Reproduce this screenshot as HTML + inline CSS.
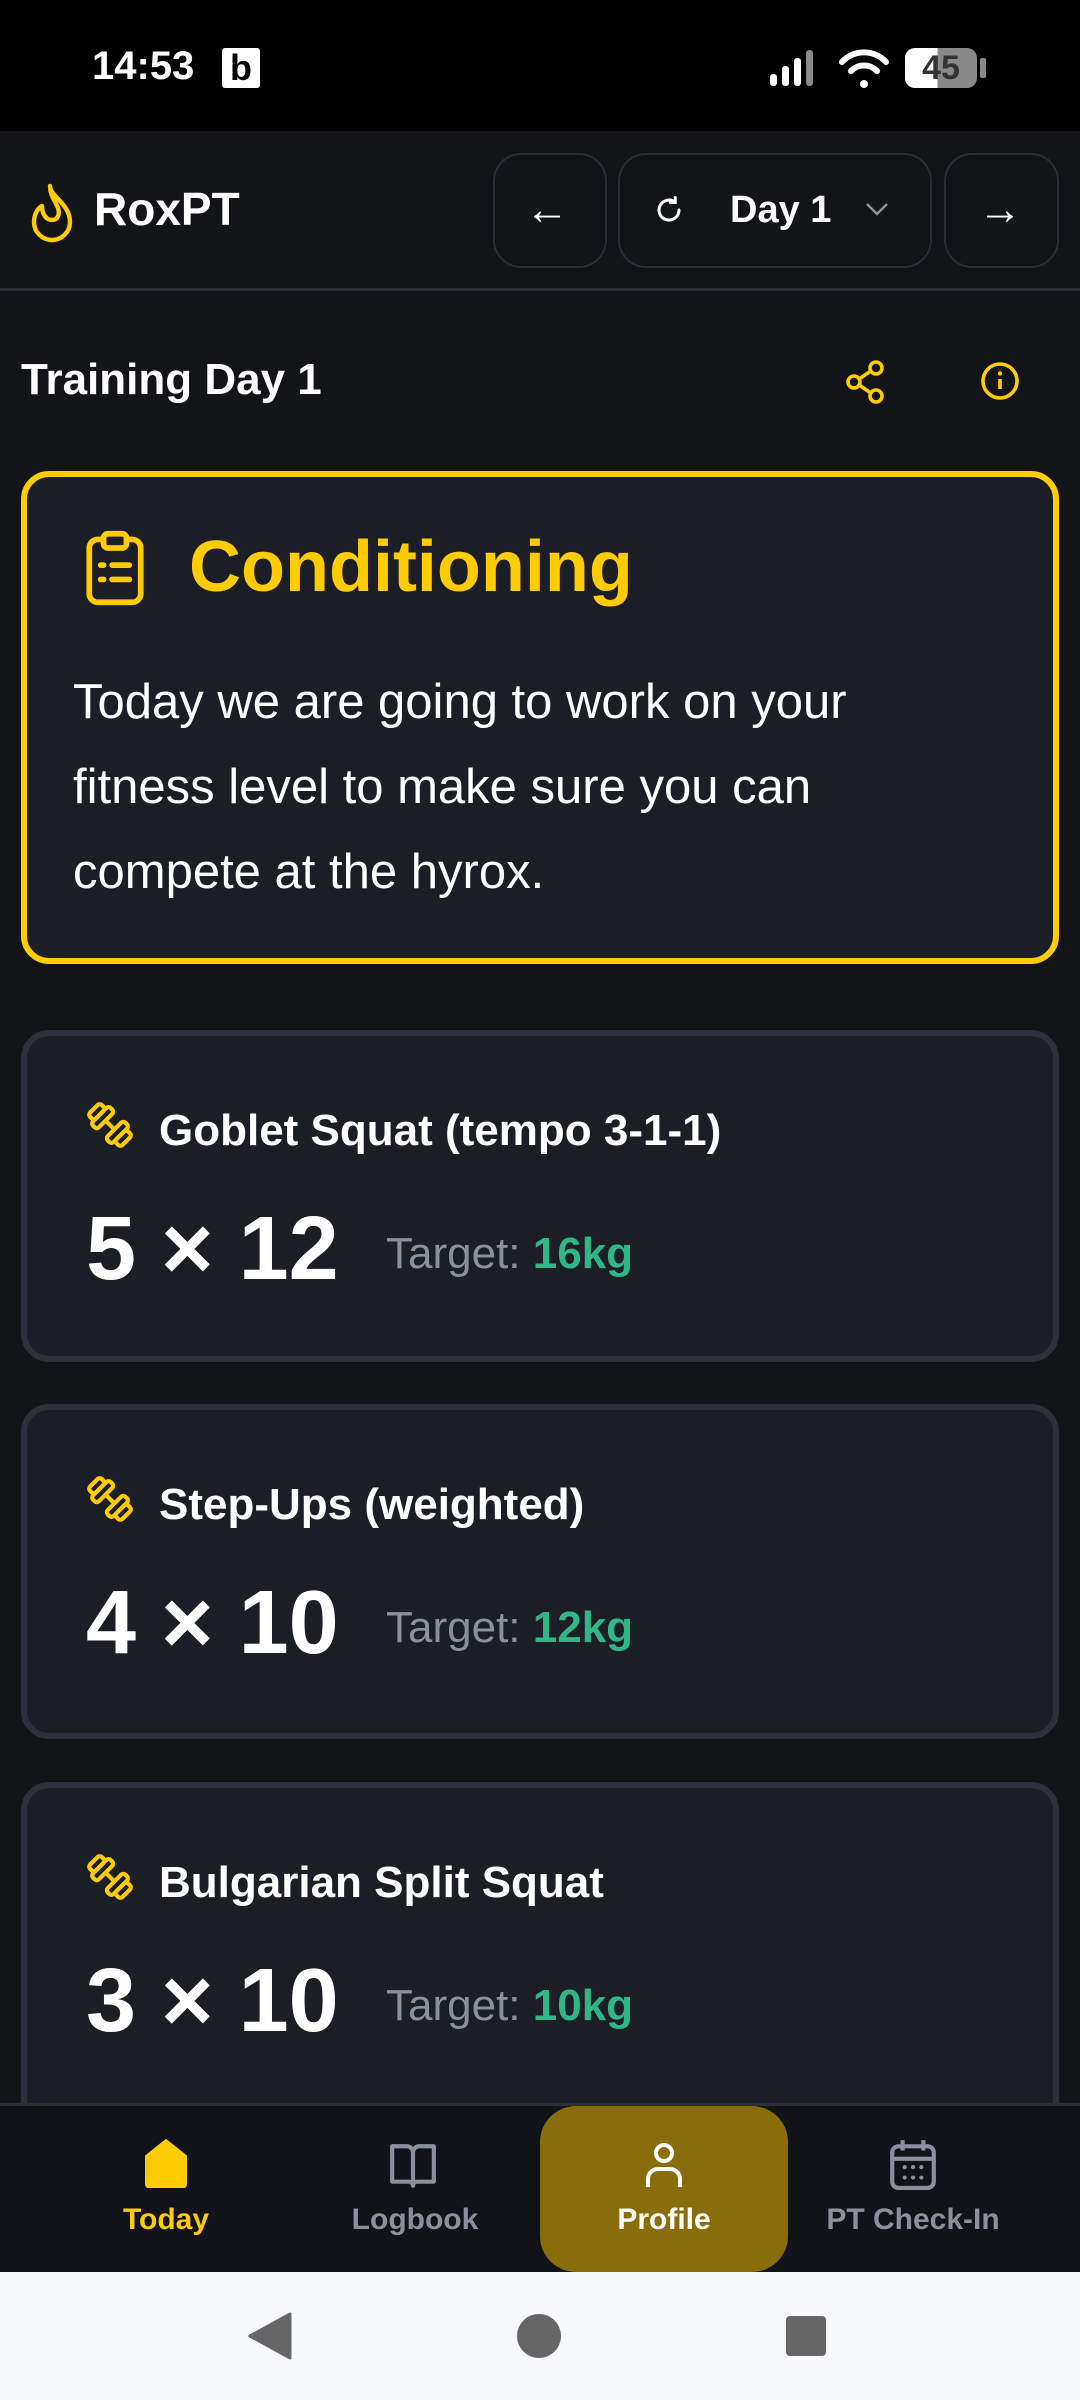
<!DOCTYPE html>
<html><head><meta charset="utf-8">
<style>
*{margin:0;padding:0;box-sizing:border-box}
body{width:1080px;height:2400px;background:#121418;font-family:"Liberation Sans",sans-serif;color:#fff;position:relative;overflow:hidden}
.a{position:absolute}
.btn{position:absolute;top:153px;height:115px;border:2px solid #2b2f38;border-radius:28px;background:#121418}
.card{position:absolute;left:21px;width:1038px;border:6px solid #2d313c;border-radius:28px;background:#1b1e25}
.t{position:absolute;left:132px;font-weight:bold;font-size:44px;white-space:nowrap}
.s{position:absolute;left:59px;font-weight:bold;font-size:90px;white-space:nowrap}
.tg{position:absolute;left:359px;font-size:44px;color:#8b909c;white-space:nowrap}
.tg b{color:#2fb886}
.nl{position:absolute;top:2203px;font-size:30px;font-weight:bold;color:#8b909c;text-align:center;width:248px}
</style></head><body>
<div class="a" style="left:0;top:0;width:1080px;height:131px;background:#000"></div>
<div class="a" style="left:92px;top:44px;font-size:40px;font-weight:bold">14:53</div>
<div class="a" style="left:222px;top:48px;width:38px;height:40px;background:#fff;border-radius:3px;color:#000;font-weight:bold;font-size:36px;text-align:center;line-height:40px">b</div>
<svg class="a" style="left:768px;top:48px" width="60" height="40"><rect x="2" y="26" width="7" height="12" rx="3" fill="#fff"/><rect x="14" y="18" width="7" height="20" rx="3" fill="#fff"/><rect x="26" y="10" width="7" height="28" rx="3" fill="#fff"/><rect x="38" y="2" width="7" height="36" rx="3" fill="#888"/></svg>
<svg class="a" style="left:838px;top:46px" width="52" height="44"><path d="M4 16 A30 30 0 0 1 48 16" stroke="#fff" stroke-width="6" fill="none" stroke-linecap="round"/><path d="M13 25 A18 18 0 0 1 39 25" stroke="#fff" stroke-width="6" fill="none" stroke-linecap="round"/><circle cx="26" cy="38" r="4" fill="#fff"/></svg>
<div class="a" style="left:905px;top:48px;width:72px;height:40px;border-radius:10px;background:linear-gradient(90deg,#fff 0 45%,#888 45%);color:#333;font-weight:bold;font-size:34px;text-align:center;line-height:40px">45</div>
<div class="a" style="left:980px;top:58px;width:6px;height:20px;background:#888;border-radius:2px"></div>

<div class="a" style="left:0;top:288px;width:1080px;height:3px;background:#2b2f38"></div>
<svg class="a" style="left:28px;top:182px" width="48" height="62" viewBox="0 0 24 31"><path d="M11 2c0 5 10 9 10 18a9 9 0 0 1-18 0c0-4 2-7 4-8 0 4 2 7 5 7 3 0 4-3 3-6-1-3-4-6-4-11z" fill="none" stroke="#ffcc00" stroke-width="2.2" stroke-linejoin="round"/></svg>
<div class="a" style="left:94px;top:182px;font-size:46px;font-weight:bold">RoxPT</div>
<div class="btn" style="left:493px;width:114px"><div class="a" style="left:30px;top:30px;font-size:44px">←</div></div>
<div class="btn" style="left:618px;width:314px">
<svg class="a" style="left:34px;top:40px" width="30" height="30" viewBox="0 0 24 24"><path d="M20 12a8 8 0 1 1-3-6.2M17 2v4h-4" fill="none" stroke="#fff" stroke-width="2.4" stroke-linecap="round"/></svg>
<div class="a" style="left:110px;top:34px;font-size:38px;font-weight:bold">Day 1</div>
<svg class="a" style="left:244px;top:44px" width="26" height="20"><path d="M3 5l10 10 10-10" stroke="#8b909c" stroke-width="2.5" fill="none"/></svg></div>
<div class="btn" style="left:944px;width:115px"><div class="a" style="left:32px;top:30px;font-size:44px">→</div></div>

<div class="a" style="left:21px;top:355px;font-size:44px;font-weight:bold">Training Day 1</div>
<svg class="a" style="left:846px;top:360px" width="40" height="44" viewBox="0 0 20 22"><circle cx="15" cy="4" r="3" fill="none" stroke="#ffcc00" stroke-width="1.8"/><circle cx="4" cy="11" r="3" fill="none" stroke="#ffcc00" stroke-width="1.8"/><circle cx="15" cy="18" r="3" fill="none" stroke="#ffcc00" stroke-width="1.8"/><path d="M6.6 9.5l5.8-4M6.6 12.5l5.8 4" stroke="#ffcc00" stroke-width="1.8"/></svg>
<svg class="a" style="left:980px;top:361px" width="40" height="40" viewBox="0 0 20 20"><circle cx="10" cy="10" r="8.5" fill="none" stroke="#ffcc00" stroke-width="1.8"/><path d="M10 9v5" stroke="#ffcc00" stroke-width="1.8"/><circle cx="10" cy="6.2" r="1.1" fill="#ffcc00"/></svg>

<div class="a" style="left:21px;top:471px;width:1038px;height:493px;border:6px solid #ffcc00;border-radius:28px;background:#1b1e25"></div>
<svg class="a" style="left:80px;top:528px" width="70" height="80" viewBox="0 0 24 28"><rect x="3" y="4" width="18" height="22" rx="3" fill="none" stroke="#ffcc00" stroke-width="2"/><rect x="8" y="2" width="8" height="5" rx="1.5" fill="#1b1e25" stroke="#ffcc00" stroke-width="2"/><path d="M7 13h1M11 13h6M7 18h1M11 18h6" stroke="#ffcc00" stroke-width="2" stroke-linecap="round"/></svg>
<div class="a" style="left:189px;top:526px;font-size:72px;font-weight:bold;color:#ffcc00">Conditioning</div>
<div class="a" style="left:73px;top:660px;font-size:49px;line-height:85px;width:900px">Today we are going to work on your fitness level to make sure you can compete at the hyrox.</div>

<svg width="0" height="0" style="position:absolute"><defs><g id="db" fill="none" stroke="#ffcc00" stroke-width="2" stroke-linejoin="round"><g transform="rotate(45 12 12)"><rect x="1" y="8" width="4" height="8" rx="1.5"/><rect x="5" y="6" width="4" height="12" rx="1.5"/><rect x="15" y="6" width="4" height="12" rx="1.5"/><rect x="19" y="8" width="4" height="8" rx="1.5"/><path d="M9 12h6"/></g></g></defs></svg>

<div class="card" style="top:1030px;height:332px">
<svg class="a" style="left:58px;top:64px" width="50" height="50" viewBox="0 0 24 24"><use href="#db"/></svg>
<div class="t" style="top:70px">Goblet Squat (tempo 3-1-1)</div>
<div class="s" style="top:162px">5 × 12</div>
<div class="tg" style="top:193px">Target: <b>16kg</b></div></div>

<div class="card" style="top:1404px;height:335px">
<svg class="a" style="left:58px;top:64px" width="50" height="50" viewBox="0 0 24 24"><use href="#db"/></svg>
<div class="t" style="top:70px">Step-Ups (weighted)</div>
<div class="s" style="top:162px">4 × 10</div>
<div class="tg" style="top:193px">Target: <b>12kg</b></div></div>

<div class="card" style="top:1782px;height:400px">
<svg class="a" style="left:58px;top:64px" width="50" height="50" viewBox="0 0 24 24"><use href="#db"/></svg>
<div class="t" style="top:70px">Bulgarian Split Squat</div>
<div class="s" style="top:162px">3 × 10</div>
<div class="tg" style="top:193px">Target: <b>10kg</b></div></div>

<div class="a" style="left:0;top:2103px;width:1080px;height:169px;background:#111318;border-top:3px solid #2b2f38"></div>
<div class="a" style="left:540px;top:2106px;width:248px;height:166px;background:#8a6d0b;border-radius:36px"></div>
<svg class="a" style="left:142px;top:2138px" width="48" height="50" viewBox="0 0 24 25"><path d="M12 1L22 9v14a2 2 0 0 1-2 2H4a2 2 0 0 1-2-2V9z" fill="#ffcc00" stroke="#ffcc00" stroke-linejoin="round"/></svg>
<svg class="a" style="left:388px;top:2140px" width="50" height="50" viewBox="0 0 24 24"><path d="M2 3h7a3 3 0 0 1 3 3v16a2 2 0 0 0-2-2H2zM22 3h-7a3 3 0 0 0-3 3v16a2 2 0 0 1 2-2h8z" fill="none" stroke="#8b909c" stroke-width="2" stroke-linejoin="round"/></svg>
<svg class="a" style="left:640px;top:2140px" width="48" height="50" viewBox="0 0 24 24"><circle cx="12" cy="6" r="4" fill="none" stroke="#fff" stroke-width="2"/><path d="M4 23v-4a5 5 0 0 1 5-5h6a5 5 0 0 1 5 5v4" fill="none" stroke="#fff" stroke-width="2"/></svg>
<svg class="a" style="left:888px;top:2138px" width="50" height="52" viewBox="0 0 24 25"><rect x="2" y="4" width="20" height="20" rx="3" fill="none" stroke="#8b909c" stroke-width="2"/><path d="M7 1v5M17 1v5M2 10h20" stroke="#8b909c" stroke-width="2"/><g fill="#8b909c"><circle cx="8" cy="14" r="1"/><circle cx="12" cy="14" r="1"/><circle cx="16" cy="14" r="1"/><circle cx="8" cy="19" r="1"/><circle cx="12" cy="19" r="1"/><circle cx="16" cy="19" r="1"/></g></svg>
<div class="nl" style="left:42px;color:#ffcc00">Today</div>
<div class="nl" style="left:291px">Logbook</div>
<div class="nl" style="left:540px;color:#fff">Profile</div>
<div class="nl" style="left:789px">PT Check-In</div>

<div class="a" style="left:0;top:2272px;width:1080px;height:128px;background:#f8f9fc"></div>
<svg class="a" style="left:246px;top:2312px" width="48" height="48"><path d="M44 2v44L4 24z" fill="#666" stroke="#666" stroke-width="3" stroke-linejoin="round"/></svg>
<div class="a" style="left:517px;top:2314px;width:44px;height:44px;border-radius:50%;background:#666"></div>
<div class="a" style="left:786px;top:2316px;width:40px;height:40px;border-radius:4px;background:#666"></div>
</body></html>
